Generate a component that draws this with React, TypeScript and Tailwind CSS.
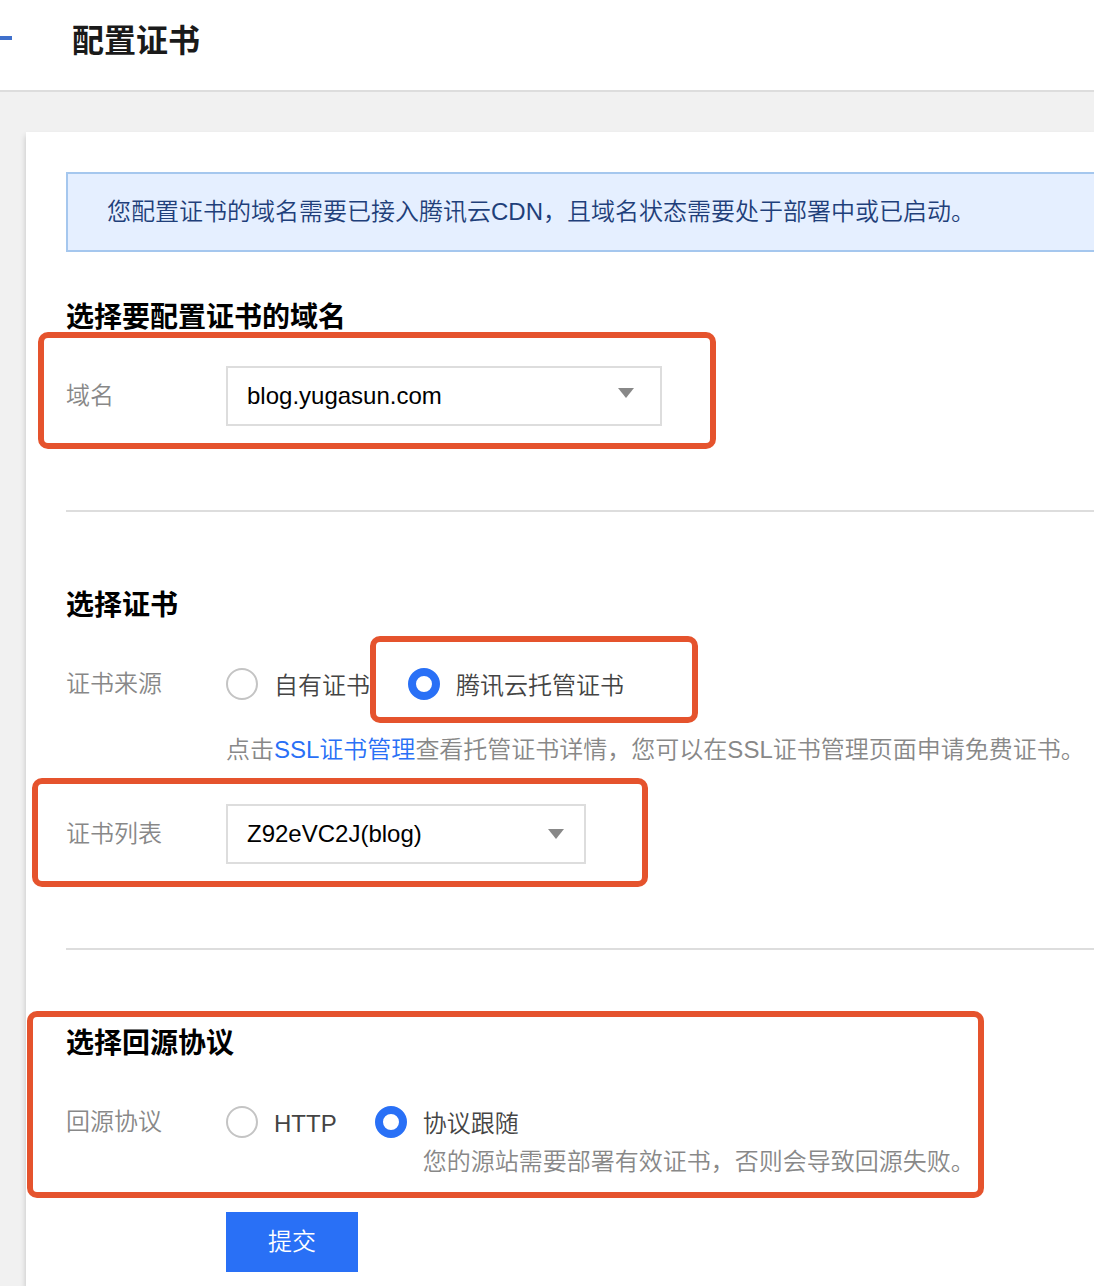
import { useState } from "react";
import type { ReactNode } from "react";
import clsx from "clsx";

type Option = { value: string; label: string; hint?: string };

const domains = ["blog.yugasun.com"];
const certificates = ["Z92eVC2J(blog)"];

const sources: Option[] = [
  { value: "own", label: "自有证书" },
  { value: "hosted", label: "腾讯云托管证书" },
];

const protocols: Option[] = [
  { value: "http", label: "HTTP" },
  {
    value: "follow",
    label: "协议跟随",
    hint: "您的源站需要部署有效证书，否则会导致回源失败。",
  },
];

// Red frame drawn over the form to point out a step.
function Marker({ className }: { className: string }) {
  return (
    <div
      aria-hidden="true"
      className={clsx(
        "pointer-events-none absolute rounded-[10px] border-6 border-[#e5532d]",
        className,
      )}
    />
  );
}

function Section({ title, children }: { title: string; children: ReactNode }) {
  return (
    <section className="relative">
      <h2 className="mb-7 text-[28px] leading-10 font-bold text-black">
        {title}
      </h2>
      {children}
    </section>
  );
}

function Divider() {
  return <hr className="mt-[84px] mb-[74px] border-t-2 border-[#dddddd]" />;
}

function SelectBox({
  id,
  options,
  className,
  arrowClassName,
}: {
  id: string;
  options: string[];
  className: string;
  arrowClassName: string;
}) {
  return (
    <div className={clsx("relative", className)}>
      <select
        id={id}
        className="h-[60px] w-full appearance-none rounded-none border-2 border-[#dddddd] bg-white pl-[19px] text-black outline-none"
      >
        {options.map((option) => (
          <option key={option}>{option}</option>
        ))}
      </select>
      <svg
        viewBox="0 0 16 10"
        className={clsx(
          "pointer-events-none absolute h-2.5 w-4 fill-[#888888]",
          arrowClassName,
        )}
        aria-hidden="true"
      >
        <path d="M0 0h16L8 10z" />
      </svg>
    </div>
  );
}

function RadioGroup({
  name,
  label,
  options,
  initial,
}: {
  name: string;
  label: string;
  options: Option[];
  initial: string;
}) {
  const [value, setValue] = useState(initial);

  return (
    <div role="radiogroup" aria-label={label} className="flex gap-[38px]">
      {options.map((option) => (
        <div key={option.value}>
          <label className="flex items-start gap-4 leading-9 whitespace-nowrap text-[#444444]">
            <input
              type="radio"
              name={name}
              value={option.value}
              checked={value === option.value}
              onChange={() => setValue(option.value)}
              className="size-8 shrink-0 appearance-none rounded-full border-2 border-[#c4c4c4] bg-white checked:border-8 checked:border-[#2970f6]"
            />
            {option.label}
          </label>
          {option.hint && (
            <p className="mt-0.5 pl-12 leading-9 whitespace-nowrap text-[#888888]">
              {option.hint}
            </p>
          )}
        </div>
      ))}
    </div>
  );
}

export default function App() {
  return (
    <div className="min-h-screen overflow-hidden bg-[#f1f1f1] font-['Liberation_Sans','Noto_Sans_CJK_SC',sans-serif] text-2xl font-[350]">
      <header className="flex items-center gap-[60px] border-b-2 border-[#dddddd] bg-white pt-4 pb-6">
        <span className="-mt-1.5 h-1 w-3 bg-[#3f70cc]" aria-hidden="true" />
        <h1 className="text-[32px] leading-[50px] font-bold text-[#1a1a1a]">
          配置证书
        </h1>
      </header>

      <main className="mt-10 ml-[26px] bg-white pt-10 pb-3.5 pl-10 shadow-[0_4px_6px_rgba(0,0,0,0.2)]">
        <p className="mb-[46px] border-2 border-r-0 border-[#a5c7ee] bg-[#e5efff] px-[39px] py-5 leading-9 text-[#1f3f7a]">
          您配置证书的域名需要已接入腾讯云CDN，且域名状态需要处于部署中或已启动。
        </p>

        <Section title="选择要配置证书的域名">
          <div className="relative flex items-center">
            <label htmlFor="domain" className="w-40 text-[#888888]">
              域名
            </label>
            <SelectBox
              id="domain"
              options={domains}
              className="w-[436px]"
              arrowClassName="top-[22px] right-7"
            />
            <Marker className="-top-[34px] -left-7 h-[117px] w-[678px]" />
          </div>
        </Section>

        <Divider />

        <Section title="选择证书">
          <div className="flex">
            <span className="w-40 leading-[60px] text-[#888888]">证书来源</span>
            <div className="relative pt-3.5">
              <RadioGroup
                name="source"
                label="证书来源"
                options={sources}
                initial="hosted"
              />
              <p className="mt-7 leading-9 whitespace-nowrap text-[#888888]">
                点击
                <a href="#ssl" className="text-[#2970f6]">
                  SSL证书管理
                </a>
                查看托管证书详情，您可以在SSL证书管理页面申请免费证书。
              </p>
              <Marker className="-top-[18px] left-36 h-[87px] w-[328px]" />
            </div>
          </div>
          <div className="relative mt-9 flex items-center">
            <label htmlFor="certificate" className="w-40 text-[#888888]">
              证书列表
            </label>
            <SelectBox
              id="certificate"
              options={certificates}
              className="w-[360px]"
              arrowClassName="top-[25px] right-[22px]"
            />
            <Marker className="-top-[26px] -left-[34px] h-[109px] w-[616px]" />
          </div>
        </Section>

        <Divider />

        <Section title="选择回源协议">
          <div className="flex">
            <span className="w-40 leading-[60px] text-[#888888]">回源协议</span>
            <div className="pt-3.5">
              <RadioGroup
                name="protocol"
                label="回源协议"
                options={protocols}
                initial="follow"
              />
              <button
                type="button"
                className="mt-8 h-[60px] w-[132px] bg-[#2970f6] text-white"
              >
                提交
              </button>
            </div>
          </div>
          <Marker className="-top-[13px] -left-[39px] h-[187px] w-[957px]" />
        </Section>
      </main>
    </div>
  );
}
